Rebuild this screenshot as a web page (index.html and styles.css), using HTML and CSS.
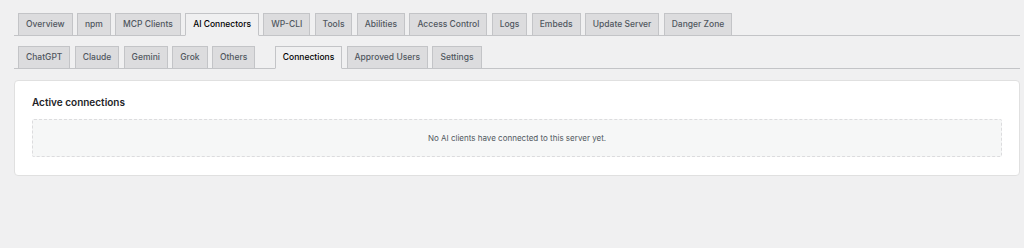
FILE: index.html
```html
<!DOCTYPE html>
<html>
<head>
<meta charset="utf-8">
<link rel="stylesheet" href="styles.css">
</head>
<body>
<div class="wrap">
  <nav class="tabs">
    <a class="tab">Overview</a>
    <a class="tab">npm</a>
    <a class="tab">MCP Clients</a>
    <a class="tab active">AI Connectors</a>
    <a class="tab">WP-CLI</a>
    <a class="tab">Tools</a>
    <a class="tab">Abilities</a>
    <a class="tab">Access Control</a>
    <a class="tab">Logs</a>
    <a class="tab">Embeds</a>
    <a class="tab">Update Server</a>
    <a class="tab">Danger Zone</a>
  </nav>
  <nav class="tabs sub">
    <a class="tab">ChatGPT</a>
    <a class="tab">Claude</a>
    <a class="tab">Gemini</a>
    <a class="tab">Grok</a>
    <a class="tab">Others</a>
    <span class="sep"></span>
    <a class="tab active">Connections</a>
    <a class="tab">Approved Users</a>
    <a class="tab">Settings</a>
  </nav>
  <section class="card">
    <h2 class="card-title">Active connections</h2>
    <div class="empty">No AI clients have connected to this server yet.</div>
  </section>
</div>
</body>
</html>
```

FILE: styles.css
```css
html, body {
  margin: 0;
  padding: 0;
  background: #f0f0f1;
  font-family: Inter, "Liberation Sans", sans-serif;
  color: #1d2327;
}
.wrap {
  padding: 13px 4px 0 14px;
}
.tabs {
  display: flex;
  align-items: flex-end;
  gap: 4.3px;
  padding-left: 4px;
  border-bottom: 1px solid #c3c4c7;
}
.tabs.sub {
  margin-top: 10px;
}
.tab {
  display: block;
  box-sizing: border-box;
  height: 23px;
  margin-bottom: -1px;
  padding: 0 7px;
  border: 1px solid #c3c4c7;
  background: #dcdcde;
  color: #50575e;
  font-size: 8.5px;
  font-weight: 500;
  line-height: 21px;
  white-space: nowrap;
}
.tab.active {
  background: #f0f0f1;
  color: #000;
  border-bottom-color: #f0f0f1;
}
.sep {
  width: 11px;
}
.card {
  margin-top: 11px;
  background: #fff;
  border: 1px solid #e0e0e0;
  border-radius: 4px;
  padding: 14px 17px 18px 17px;
}
.card-title {
  margin: 0 0 10px 0;
  font-size: 10px;
  font-weight: 600;
  line-height: 14px;
  color: #1d2327;
}
.empty {
  box-sizing: border-box;
  height: 38px;
  border: 1px dashed #dcdcde;
  background: #f6f7f7;
  border-radius: 2px;
  display: flex;
  align-items: center;
  justify-content: center;
  font-size: 8px;
  color: #50575e;
}
```
